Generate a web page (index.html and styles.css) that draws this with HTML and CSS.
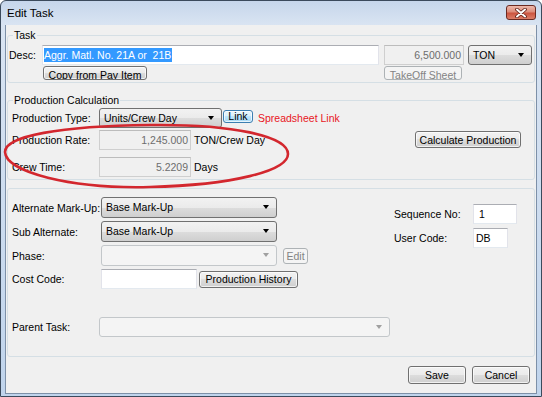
FILE: index.html
```html
<!DOCTYPE html>
<html>
<head>
    <title>Edit Task</title>
    <link rel="stylesheet" href="styles.css">
</head>
<body>
    <div class="window">
        <div class="titlebar">
            <span class="title">Edit Task</span>
            <span class="close-btn">
                <svg width="14" height="10" viewBox="0 0 14 10">
                    <path d="M3 1.5 L11 8.5 M11 1.5 L3 8.5" stroke="#5a1a12" stroke-width="3.6" stroke-linecap="round"/>
                    <path d="M3 1.5 L11 8.5 M11 1.5 L3 8.5" stroke="#ffffff" stroke-width="2" stroke-linecap="round"/>
                </svg>
            </span>
        </div>

        <div class="client">
            <!-- Task -->
            <fieldset class="group group-task">
                <legend>Task</legend>
                <div class="row task-row1">
                    <span class="lbl lbl-desc">Desc:</span>
                    <div class="textbox desc"><span class="sel">Aggr. Matl. No. 21A or  21B</span></div>
                    <div class="textbox disabled num qty">6,500.000</div>
                    <div class="combo unit">TON<span class="arrow"></span></div>
                </div>
                <div class="row task-row2">
                    <button class="btn small copy-btn">Copy from Pay Item</button>
                    <button class="btn small disabled takeoff-btn">TakeOff Sheet</button>
                </div>
            </fieldset>

            <!-- Production Calculation -->
            <fieldset class="group group-prod">
                <legend>Production Calculation</legend>
                <div class="prod-body">
                    <div class="prod-left">
                        <div class="row prod-row1">
                            <span class="lbl lbl-prod">Production Type:</span>
                            <div class="combo prod-type">Units/Crew Day<span class="arrow"></span></div>
                            <button class="btn link-btn">Link</button>
                            <span class="sheet-link">Spreadsheet Link</span>
                        </div>
                        <div class="row prod-row2">
                            <span class="lbl lbl-prod">Production Rate:</span>
                            <div class="textbox disabled num prod-val">1,245.000</div>
                            <span class="unit-text">TON/Crew Day</span>
                        </div>
                        <div class="row prod-row3">
                            <span class="lbl lbl-prod">Crew Time:</span>
                            <div class="textbox disabled num prod-val">5.2209</div>
                            <span class="unit-text">Days</span>
                        </div>
                    </div>
                    <button class="btn calc-btn">Calculate Production</button>
                </div>
            </fieldset>

            <!-- Other settings -->
            <fieldset class="group group-other">
                <div class="other-top">
                    <div class="other-left">
                        <div class="row alt-row">
                            <span class="lbl lbl-other">Alternate Mark-Up:</span>
                            <div class="combo markup">Base Mark-Up<span class="arrow"></span></div>
                        </div>
                        <div class="row sub-row">
                            <span class="lbl lbl-other">Sub Alternate:</span>
                            <div class="combo markup">Base Mark-Up<span class="arrow"></span></div>
                        </div>
                        <div class="row phase-row">
                            <span class="lbl lbl-other">Phase:</span>
                            <div class="combo disabled markup"><span class="arrow"></span></div>
                            <button class="btn disabled edit-btn">Edit</button>
                        </div>
                        <div class="row cost-row">
                            <span class="lbl lbl-other">Cost Code:</span>
                            <div class="textbox cost"></div>
                            <button class="btn history-btn">Production History</button>
                        </div>
                    </div>
                    <div class="other-right">
                        <div class="row seq-row">
                            <span class="lbl lbl-right">Sequence No:</span>
                            <div class="textbox seq">&nbsp;1</div>
                        </div>
                        <div class="row user-row">
                            <span class="lbl lbl-right">User Code:</span>
                            <div class="textbox user">DB</div>
                        </div>
                    </div>
                </div>
                <div class="row parent-row">
                    <span class="lbl lbl-parent">Parent Task:</span>
                    <div class="combo disabled parent"><span class="arrow"></span></div>
                </div>
            </fieldset>

            <div class="footer">
                <button class="btn footer-btn">Save</button>
                <button class="btn footer-btn">Cancel</button>
            </div>
        </div>

        <!-- red hand-drawn marker over the screenshot -->
        <svg class="marker" width="542" height="397" viewBox="0 0 542 397">
            <path d="M5 152 C 5 136, 60 126, 150 125 C 232 124, 288 136, 288 154 C 288 171, 232 185, 150 187 C 70 189, 6 172, 5 152 Z"
                  fill="none" stroke="#d3272e" stroke-width="2.6"/>
        </svg>
    </div>
</body>
</html>
```

FILE: styles.css
```css
body {
    margin: 0;
    padding: 0;
    font-family: "Liberation Sans", Arial, sans-serif;
    font-size: 10.5px;
    color: #000;
    background: #ffffff;
}

/* window frame */
.window {
    position: relative;
    width: 542px;
    height: 397px;
    box-sizing: border-box;
    border: 1px solid #3b4a5c;
    border-radius: 6px 6px 0 0;
    background: linear-gradient(#c6d6eb, #d9e4f2 24px, #c0d4ec);
    padding: 0 4px 2px 4px;
    display: flex;
    flex-direction: column;
}

.titlebar {
    height: 24px;
    flex: none;
    display: flex;
    justify-content: space-between;
    align-items: flex-start;
}

.title {
    margin-left: 2px;
    align-self: center;
    font-size: 11.5px;
}

.close-btn {
    width: 30px;
    height: 15px;
    box-sizing: border-box;
    margin-top: 4px;
    margin-right: 1px;
    border: 1px solid #6b2a22;
    border-radius: 3px;
    background: linear-gradient(#edb8ac, #dd8c7a 45%, #cc5540 55%, #dc7e68);
    display: flex;
    align-items: center;
    justify-content: center;
}

.client {
    flex: 1;
    background: #f0f0f0;
    border: 1px solid #7d90a8;
    border-top: none;
    padding: 4px 1px 0 1px;
}

/* group boxes */
.group {
    margin: 0;
    padding: 0;
    min-width: 0;
    box-sizing: border-box;
    border: 1px solid #d5dfe5;
    border-radius: 3px;
}

.group legend {
    margin-left: 5px;
    padding: 0 1px;
    line-height: 13px;
}

.group-task {
    height: 54px;
}

.group-prod {
    margin-top: 11px;
    height: 86px;
}

.group-other {
    margin-top: 8px;
    height: 169px;
}

.row {
    display: flex;
    align-items: center;
}

.lbl {
    flex: none;
    white-space: nowrap;
}

/* controls */
.textbox {
    box-sizing: border-box;
    height: 20px;
    flex: none;
    background: #ffffff;
    border: 1px solid #e2e3ea;
    border-top-color: #abadb3;
    border-bottom-color: #e3e9ef;
    padding: 0 2px;
    line-height: 18px;
    white-space: pre;
    overflow: hidden;
}

.textbox.disabled {
    background: #f0f0f0;
    border-color: #cfcfcf;
    border-top-color: #bcbcbc;
    color: #6d6d6d;
}

.textbox.num {
    text-align: right;
}

.sel {
    background: #3399ff;
    color: #ffffff;
    padding: 1px 1px 1px 0;
}

.combo {
    position: relative;
    box-sizing: border-box;
    height: 20px;
    flex: none;
    border: 1px solid #707070;
    border-radius: 3px;
    background: linear-gradient(#f2f2f2, #ebebeb 50%, #dddddd 50%, #cfcfcf);
    padding-left: 4px;
    line-height: 18px;
    white-space: nowrap;
}

.combo .arrow {
    position: absolute;
    right: 7px;
    top: 7px;
    width: 0;
    height: 0;
    border-left: 3.5px solid transparent;
    border-right: 3.5px solid transparent;
    border-top: 4px solid #000;
}

.combo.disabled {
    border-color: #c3c7ca;
    background: #f4f4f4;
}

.combo.disabled .arrow {
    border-top-color: #a0a0a0;
}

.btn {
    box-sizing: border-box;
    flex: none;
    margin: 0;
    padding: 0;
    font-family: inherit;
    font-size: 10.5px;
    color: #000;
    border: 1px solid #707070;
    border-radius: 3px;
    background: linear-gradient(#f2f2f2, #ebebeb 50%, #dddddd 50%, #cfcfcf);
    box-shadow: inset 0 0 0 1px rgba(255, 255, 255, 0.7);
    white-space: nowrap;
    overflow: hidden;
}

.btn.disabled {
    border-color: #adb2b5;
    background: #f4f4f4;
    box-shadow: none;
    color: #838383;
}

.btn.small {
    height: 14px;
    line-height: 13px;
    padding-top: 2px;
}

/* Task group */
.task-row1 {
    margin-top: 3px;
    height: 20px;
}

.lbl-desc {
    margin-left: 1px;
    width: 33px;
}

.desc {
    width: 337px;
    padding-left: 1px;
}

.qty {
    width: 80px;
    margin-left: 5px;
}

.unit {
    width: 64px;
    margin-left: 4px;
}

.task-row2 {
    margin-top: 1px;
}

.copy-btn {
    margin-left: 35px;
    width: 104px;
}

.takeoff-btn {
    margin-left: 237px;
    width: 78px;
}

/* Production group */
.prod-body {
    display: flex;
}

.prod-left {
    flex: none;
    width: 407px;
}

.prod-row1 {
    margin-top: 1px;
}

.lbl-prod {
    margin-left: 4px;
    width: 87px;
}

.prod-type {
    width: 123px;
}

.link-btn {
    margin-left: 1px;
    margin-top: -3px;
    width: 30px;
    height: 13px;
    line-height: 11px;
    border-color: #3c7fb1;
    background: linear-gradient(#eaf6fd, #d9f0fc 50%, #bee6fd 50%, #a7d9f5);
}

.sheet-link {
    margin-left: 5px;
    color: #e8161e;
}

.prod-row2 {
    margin-top: 2px;
}

.prod-row3 {
    margin-top: 7px;
}

.prod-val {
    width: 92px;
}

.unit-text {
    margin-left: 3px;
}

.calc-btn {
    margin-top: 24px;
    width: 106px;
    height: 17px;
}

/* Other group */
.other-top {
    display: flex;
}

.other-left {
    flex: none;
    width: 386px;
}

.lbl-other {
    margin-left: 4px;
    width: 89px;
}

.alt-row {
    margin-top: 8px;
}

.sub-row,
.phase-row,
.cost-row {
    margin-top: 3px;
}

.markup {
    width: 176px;
    height: 21px;
    line-height: 19px;
}

.edit-btn {
    margin-left: 6px;
    width: 25px;
    height: 16px;
}

.cost {
    width: 96px;
}

.history-btn {
    margin-left: 2px;
    width: 99px;
    height: 17px;
}

.other-right {
    margin-top: 15px;
}

.lbl-right {
    width: 79px;
}

.seq {
    width: 44px;
}

.user-row {
    margin-top: 4px;
}

.user {
    width: 35px;
}

.parent-row {
    margin-top: 28px;
}

.lbl-parent {
    margin-left: 4px;
    width: 87px;
}

.parent {
    width: 291px;
}

/* bottom buttons */
.footer {
    margin-top: 9px;
    display: flex;
    justify-content: flex-end;
    gap: 6px;
    padding-right: 5px;
}

.footer-btn {
    width: 58px;
    height: 18px;
}

/* red hand-drawn marker */
.marker {
    position: absolute;
    left: -1px;
    top: -1px;
    pointer-events: none;
}
```
